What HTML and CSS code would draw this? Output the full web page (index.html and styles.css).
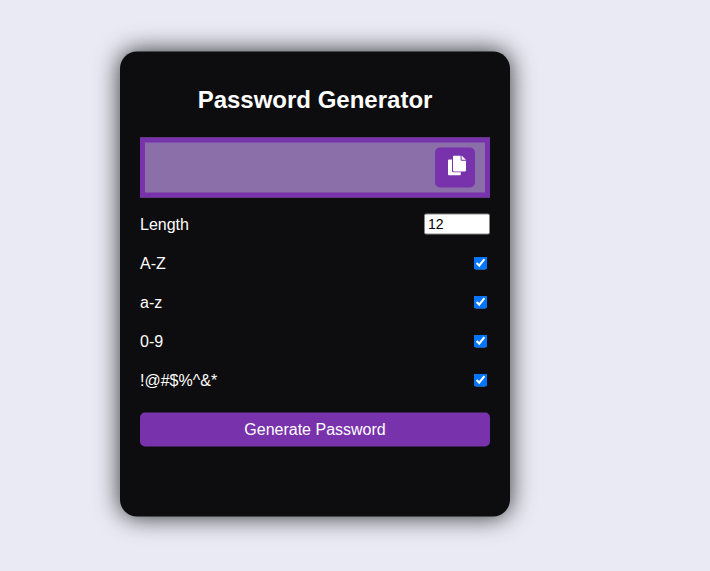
FILE: index.html
```html
<!DOCTYPE html>
<html lang="en">
<head>
<meta charset="utf-8">
<title>Password Generator</title>
<link rel="stylesheet" href="styles.css">
</head>
<body>
<main class="card">
  <h2 class="title">Password Generator</h2>
  <div class="result">
    <button class="copy" aria-label="Copy">
      <svg class="copy-icon" viewBox="0 0 18 20" fill="#fff">
        <path d="M1.2 4H4V15.2Q4 16.8 5.6 16.8H12.8V18.8Q12.8 20 11.6 20H1.2Q0 20 0 18.8V5.2Q0 4 1.2 4Z"/>
        <path d="M6.2 0H12.6V4.2Q12.6 5.2 13.6 5.2H18V14.8Q18 16 16.8 16H6.2Q5 16 5 14.8V1.2Q5 0 6.2 0Z"/>
        <path d="M13.6 0L18 4.3H13.6Z"/>
      </svg>
    </button>
  </div>
  <div class="settings">
    <label class="row"><span>Length</span><input class="length" type="number" value="12" min="4" max="20"></label>
    <label class="row"><span>A-Z</span><input class="check" type="checkbox" checked></label>
    <label class="row"><span>a-z</span><input class="check" type="checkbox" checked></label>
    <label class="row"><span>0-9</span><input class="check" type="checkbox" checked></label>
    <label class="row"><span>!@#$%^&amp;*</span><input class="check" type="checkbox" checked></label>
  </div>
  <button class="generate">Generate Password</button>
</main>
</body>
</html>
```
FILE: styles.css
```css
* { box-sizing: border-box; }
body {
  margin: 0;
  padding: 52px 0 0 120px;
  min-height: 571px;
  background: #eaeaf5;
  color: #fff;
  font: 16px/18px "Liberation Sans", Arial, sans-serif;
}
.card {
  width: 390px;
  height: 465px;
  padding: 34px 20px 0;
  border-radius: 17px;
  background: #0d0d0f;
  box-shadow: 0 0 25px rgba(0, 0, 0, .8);
  transform: translateY(-.5px);
}
.title {
  margin: 0 0 25px;
  font-size: 24px;
  line-height: 27px;
  text-align: center;
}
.result {
  display: flex;
  align-items: center;
  justify-content: flex-end;
  height: 60px;
  padding-right: 10px;
  border: 5px solid #7832ac;
  background: #8b6fa8;
}
.copy {
  display: flex;
  align-items: center;
  justify-content: center;
  width: 40px;
  height: 40px;
  padding: 0 0 4px 4px;
  border: 0;
  border-radius: 5px;
  background: #7832ac;
}
.copy-icon { width: 18px; height: 20px; }
.settings { padding-top: 7px; }
.row {
  display: flex;
  align-items: center;
  justify-content: space-between;
  height: 39px;
}
.length {
  width: 66px;
  height: 21px;
  margin-bottom: 1px;
  padding: 1px 3px;
  border: 1px solid #858585;
  border-radius: 2px;
  background: #fff;
  color: #000;
  font: 14px/16px "Liberation Sans", Arial, sans-serif;
}
.check { margin: 3px 3px 3px 4px; }
.generate {
  display: block;
  width: 100%;
  height: 34px;
  margin-top: 13px;
  padding: 0;
  border: 0;
  border-radius: 5px;
  background: #7832ac;
  color: #fff;
  font: 16px/18px "Liberation Sans", Arial, sans-serif;
}
```
